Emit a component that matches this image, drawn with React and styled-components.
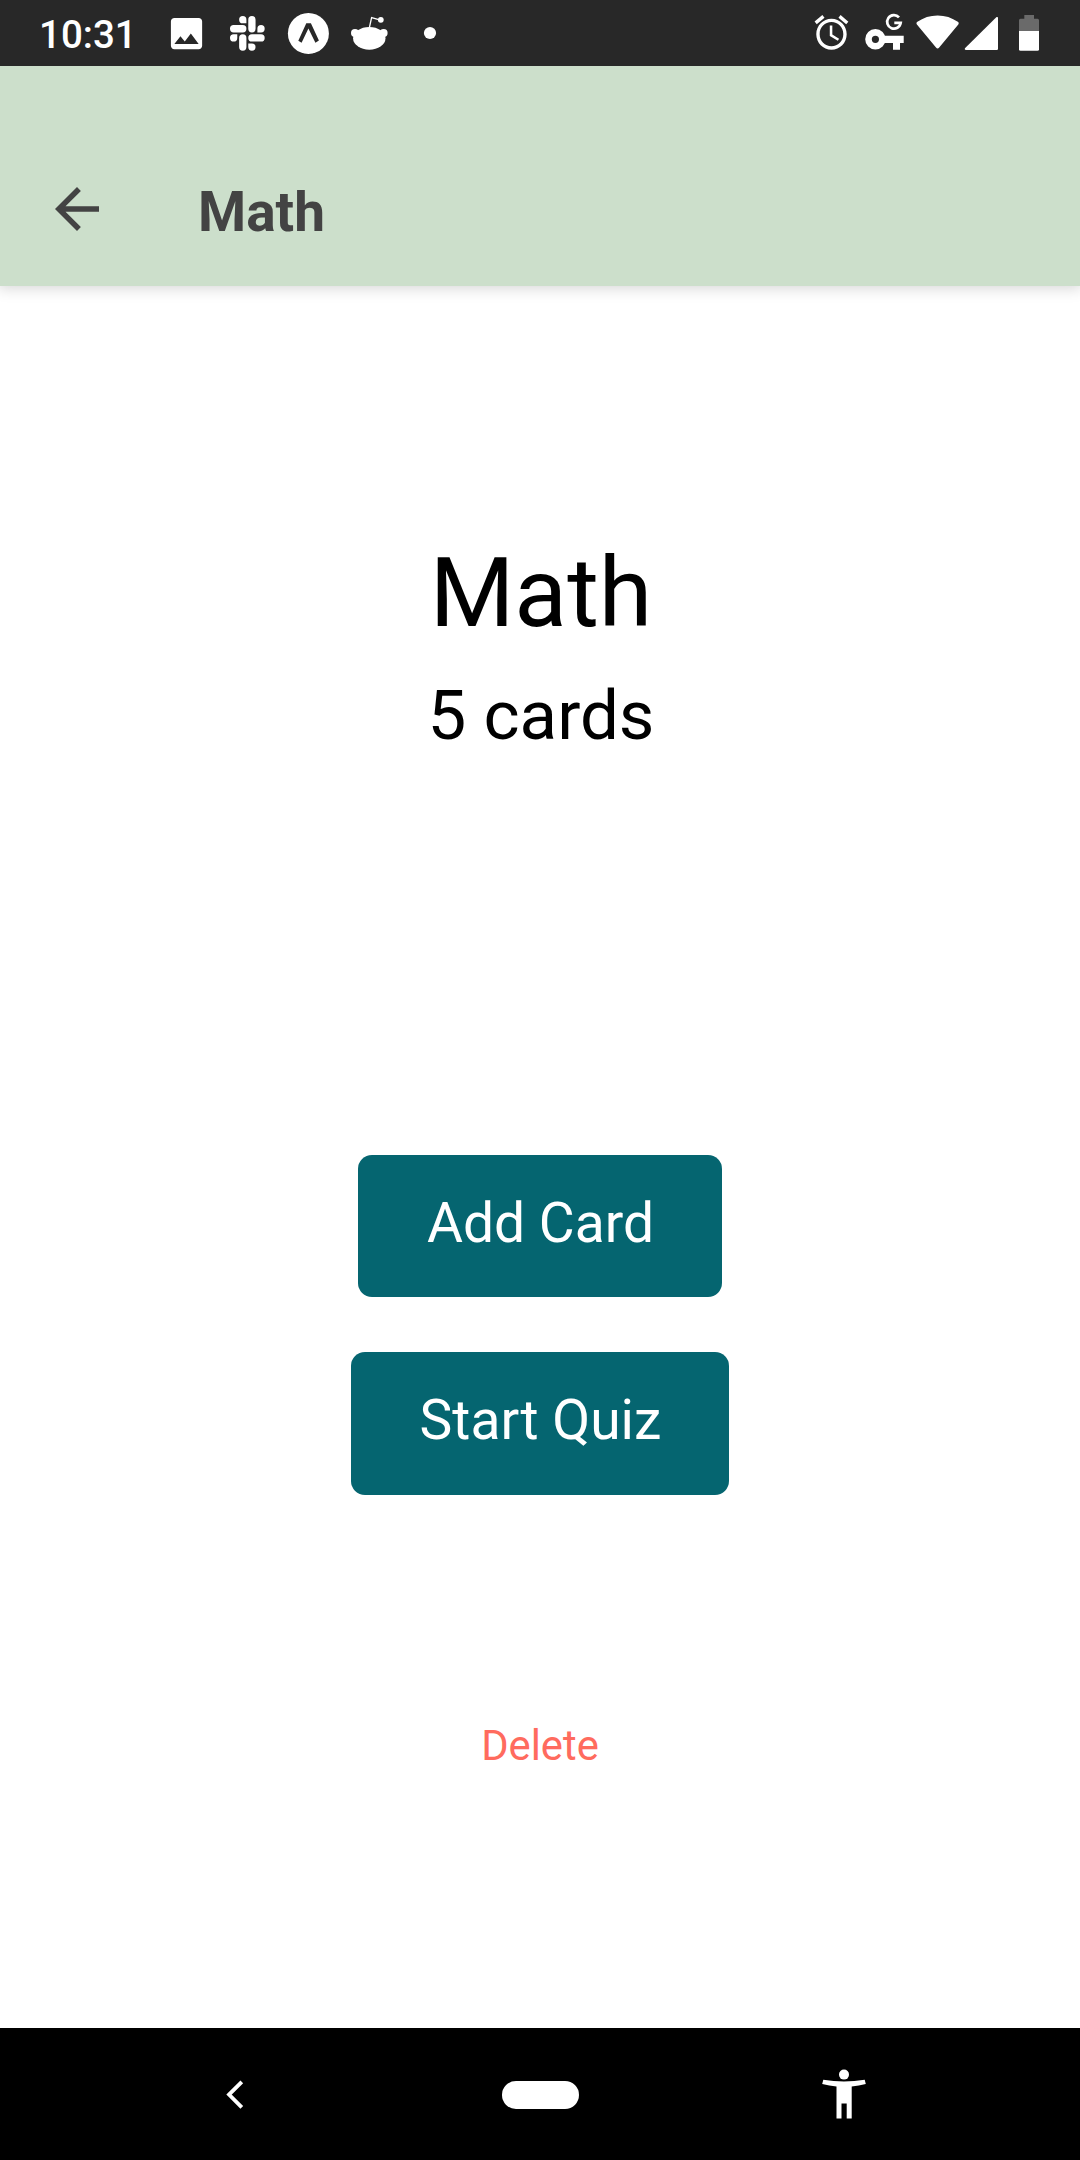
import React from "react";
import styled, { createGlobalStyle } from "styled-components";

const GlobalStyle = createGlobalStyle`
  *, *::before, *::after { box-sizing: border-box; }
  body { margin: 0; background: #ffffff; }
`;

const Screen = styled.div`
  display: flex;
  flex-direction: column;
  width: 1080px;
  height: 2160px;
  overflow: hidden;
  background: #ffffff;
  font-family: Roboto, sans-serif;
`;

const StatusBar = styled.div`
  display: flex;
  justify-content: space-between;
  flex: none;
  height: 66px;
  padding: 0 34px 0 39px;
  background: #282828;
  color: #ffffff;
`;

const StatusGroup = styled.div`
  display: flex;
`;

const Clock = styled.time`
  width: 125px;
  font-size: 38.5px;
  font-weight: 500;
  line-height: 69px;
  white-space: nowrap;
`;

const Glyph = styled.svg`
  display: block;
  flex: none;
  width: ${(p) => p.$w}px;
  height: ${(p) => p.$h || 66}px;
`;

const Header = styled.header`
  display: flex;
  flex: none;
  align-items: flex-start;
  height: 220px;
  padding: 110px 44px 0;
  background: #ccdfcb;
  color: #434343;
  box-shadow: 0 0 14px 2px rgba(0, 0, 0, 0.17);
  clip-path: inset(0 0 -30px 0);
`;

const IconButton = styled.button`
  display: flex;
  padding: 0;
  border: 0;
  background: none;
  color: inherit;
`;

const HeaderTitle = styled.h1`
  margin: 4px 0 0 88px;
  font-size: 55px;
  font-weight: 700;
  line-height: 64px;
`;

const Main = styled.main`
  display: flex;
  flex: 1;
  flex-direction: column;
  align-items: center;
  padding-top: 251px;
`;

const DeckInfo = styled.section`
  display: flex;
  flex-direction: column;
  align-items: center;
  gap: 25px;
  height: 618px;
  padding-left: 2px;
  color: #000000;
`;

const DeckName = styled.h2`
  margin: 0;
  font-size: 97px;
  font-weight: 400;
  line-height: 113px;
`;

const CardCount = styled.p`
  margin: 0;
  font-size: 69px;
  line-height: 81px;
`;

const Actions = styled.div`
  display: flex;
  flex-direction: column;
  align-items: center;
  gap: 55px;
`;

const ActionButton = styled.button`
  width: ${(p) => p.$width}px;
  height: ${(p) => p.$height}px;
  padding: 36px 0 ${(p) => p.$height - 100}px 1px;
  border: 0;
  border-radius: 14px;
  background: #056570;
  color: #ffffff;
  font: 400 55.2px/64px Roboto, sans-serif;
  white-space: nowrap;
`;

const DeleteButton = styled.button`
  margin-top: 227px;
  padding: 0;
  border: 0;
  background: none;
  color: #ff6b5e;
  font: 400 41.75px/48px Roboto, sans-serif;
`;

const NavBar = styled.nav`
  display: flex;
  flex: none;
  align-items: center;
  justify-content: space-between;
  height: 132px;
  padding: 0 206px;
  background: #000000;
  color: #ffffff;
`;

const HomePill = styled.button`
  width: 77px;
  height: 28px;
  margin-top: 1px;
  padding: 0;
  border: 0;
  border-radius: 14px;
  background: #ffffff;
`;

const PhotoIcon = () => (
  <Glyph $w={60} viewBox="164 0 60 66" fill="#fff">
    <path
      transform="translate(165.7 12.8) scale(1.735)"
      d="M21 19V5c0-1.1-.9-2-2-2H5c-1.1 0-2 .9-2 2v14c0 1.1.9 2 2 2h14c1.1 0 2-.9 2-2zM8.5 13.5l2.5 3.01L14.5 12l4.5 6H5l3.5-4.5z"
    />
  </Glyph>
);

const SlackIcon = () => (
  <Glyph $w={60} viewBox="224 0 60 66" fill="#fff">
    <path
      transform="translate(230 16) scale(1.445)"
      d="M5.042 15.165a2.528 2.528 0 0 1-2.52 2.523A2.528 2.528 0 0 1 0 15.165a2.527 2.527 0 0 1 2.522-2.52h2.52v2.52zM6.313 15.165a2.527 2.527 0 0 1 2.521-2.52 2.527 2.527 0 0 1 2.521 2.52v6.313A2.528 2.528 0 0 1 8.834 24a2.528 2.528 0 0 1-2.521-2.522v-6.313zM8.834 5.042a2.528 2.528 0 0 1-2.521-2.52A2.528 2.528 0 0 1 8.834 0a2.528 2.528 0 0 1 2.521 2.522v2.52H8.834zM8.834 6.313a2.528 2.528 0 0 1 2.521 2.521 2.528 2.528 0 0 1-2.521 2.521H2.522A2.528 2.528 0 0 1 0 8.834a2.528 2.528 0 0 1 2.522-2.521h6.312zM18.956 8.834a2.528 2.528 0 0 1 2.522-2.521A2.528 2.528 0 0 1 24 8.834a2.528 2.528 0 0 1-2.522 2.521h-2.522V8.834zM17.688 8.834a2.528 2.528 0 0 1-2.523 2.521 2.527 2.527 0 0 1-2.52-2.521V2.522A2.527 2.527 0 0 1 15.165 0a2.528 2.528 0 0 1 2.523 2.522v6.312zM15.165 18.956a2.528 2.528 0 0 1 2.523 2.522A2.528 2.528 0 0 1 15.165 24a2.527 2.527 0 0 1-2.52-2.522v-2.522h2.52zM15.165 17.688a2.527 2.527 0 0 1-2.52-2.523 2.526 2.526 0 0 1 2.52-2.52h6.313A2.527 2.527 0 0 1 24 15.165a2.528 2.528 0 0 1-2.522 2.523h-6.313z"
    />
  </Glyph>
);

const ExpoIcon = () => (
  <Glyph $w={60} viewBox="284 0 60 66">
    <circle cx="308.4" cy="33.4" r="20.5" fill="#fff" />
    <path
      d="M306.3 23.2h4.6l8 17.3-3.5 2.3-7-14.2-6.8 14.2-3.3-2z"
      fill="#282828"
    />
  </Glyph>
);

const RedditIcon = () => (
  <Glyph $w={60} viewBox="344 0 60 66" fill="#fff">
    <circle cx="355" cy="33" r="4" />
    <circle cx="383.6" cy="33" r="4" />
    <ellipse cx="369.3" cy="38.3" rx="16.2" ry="11.4" />
    <path d="M369.3 28l2.3-10.4 8 2.2" fill="none" stroke="#fff" strokeWidth="1.3" />
    <circle cx="380.8" cy="19.8" r="2.9" />
  </Glyph>
);

const MoreDot = () => (
  <Glyph $w={50} viewBox="404 0 50 66">
    <circle cx="430" cy="33" r="6.1" fill="#fff" />
  </Glyph>
);

const AlarmIcon = () => (
  <Glyph $w={50} viewBox="810 0 50 66" fill="#fff">
    <path
      transform="translate(811.2 11.8) scale(1.69 1.72)"
      d="M22 5.72l-4.6-3.86-1.29 1.53 4.6 3.86L22 5.72zM7.88 3.39L6.6 1.86 2 5.71l1.29 1.53 4.59-3.85zM12.5 8H11v6l4.75 2.85.75-1.23-4-2.37V8zM12 4c-4.97 0-9 4.03-9 9s4.02 9 9 9c4.97 0 9-4.03 9-9s-4.03-9-9-9zm0 16c-3.87 0-7-3.13-7-7s3.13-7 7-7 7 3.13 7 7-3.13 7-7 7z"
    />
  </Glyph>
);

const VpnKeyIcon = () => (
  <Glyph $w={51} viewBox="860 0 51 66">
    <circle cx="875.4" cy="39.3" r="6.9" fill="none" stroke="#fff" strokeWidth="6.6" />
    <path d="M884 35.7h19.7v7.3H900v6.7h-7V43h-9z" fill="#fff" />
    <path
      d="M899 17.3A6.8 6.8 0 1 0 900.7 22.9h-6.4"
      fill="none"
      stroke="#fff"
      strokeWidth="2.7"
    />
  </Glyph>
);

const WifiIcon = () => (
  <Glyph $w={50} viewBox="911 0 50 66" fill="#fff">
    <path d="M917.4 21.8c5.8-4.2 12.7-6.4 20.2-6.4s14.4 2.2 20.2 6.4c1 .7 1.2 1.7.5 2.6l-19.1 23.1c-1 1.2-2.2 1.2-3.2 0l-19.1-23.1c-.7-.9-.5-1.9.5-2.6z" />
  </Glyph>
);

const SignalIcon = () => (
  <Glyph $w={45} viewBox="961 0 45 66" fill="#fff">
    <path d="M996.3 17.3c.8-.7 1.7-.3 1.7.8V48.8q0 1.2-1.2 1.2H966c-1.3 0-1.7-1.1-.8-2z" />
  </Glyph>
);

const BatteryIcon = () => (
  <Glyph $w={40} viewBox="1006 0 40 66">
    <path
      d="M1024.3 15h9.7v3.7h3.5q1.5 0 1.5 1.5V31h-20V20.2q0-1.5 1.5-1.5h3.8z"
      fill="#6a6a6a"
    />
    <path d="M1019 31h20v18.2q0 1.5-1.5 1.5h-17q-1.5 0-1.5-1.5z" fill="#fff" />
  </Glyph>
);

const ArrowBackIcon = () => (
  <Glyph $w={66} $h={66} viewBox="0 0 24 24" fill="currentColor">
    <path d="M20 11H7.83l5.59-5.59L12 4l-8 8 8 8 1.41-1.41L7.83 13H20v-2z" />
  </Glyph>
);

const NavBackIcon = () => (
  <Glyph $w={60} $h={60} viewBox="206 2064 60 60">
    <path d="M241.8 2081.8l-12.8 12.8 12.8 12.8" fill="none" stroke="#fff" strokeWidth="3.8" />
  </Glyph>
);

const AccessibilityIcon = () => (
  <Glyph $w={60} $h={60} viewBox="814 2064 60 60" fill="#fff">
    <circle cx="844" cy="2074.6" r="5" />
    <path d="M823.3 2079.8q20.7 3.6 41.4 0l1.1 4.1q-7 1.7-14.1 2.5v32h-5v-15h-5.2v15h-5v-32q-7.1-.8-14.3-2.5z" />
  </Glyph>
);

export default function App() {
  return (
    <>
      <GlobalStyle />
      <Screen>
        <StatusBar>
          <StatusGroup>
            <Clock>10:31</Clock>
            <PhotoIcon />
            <SlackIcon />
            <ExpoIcon />
            <RedditIcon />
            <MoreDot />
          </StatusGroup>
          <StatusGroup>
            <AlarmIcon />
            <VpnKeyIcon />
            <WifiIcon />
            <SignalIcon />
            <BatteryIcon />
          </StatusGroup>
        </StatusBar>
        <Header>
          <IconButton aria-label="Back">
            <ArrowBackIcon />
          </IconButton>
          <HeaderTitle>Math</HeaderTitle>
        </Header>
        <Main>
          <DeckInfo>
            <DeckName>Math</DeckName>
            <CardCount>5 cards</CardCount>
          </DeckInfo>
          <Actions>
            <ActionButton $width={364} $height={142}>Add Card</ActionButton>
            <ActionButton $width={378} $height={143}>Start Quiz</ActionButton>
          </Actions>
          <DeleteButton>Delete</DeleteButton>
        </Main>
        <NavBar>
          <IconButton aria-label="Navigate back">
            <NavBackIcon />
          </IconButton>
          <HomePill aria-label="Home" />
          <IconButton aria-label="Accessibility">
            <AccessibilityIcon />
          </IconButton>
        </NavBar>
      </Screen>
    </>
  );
}
